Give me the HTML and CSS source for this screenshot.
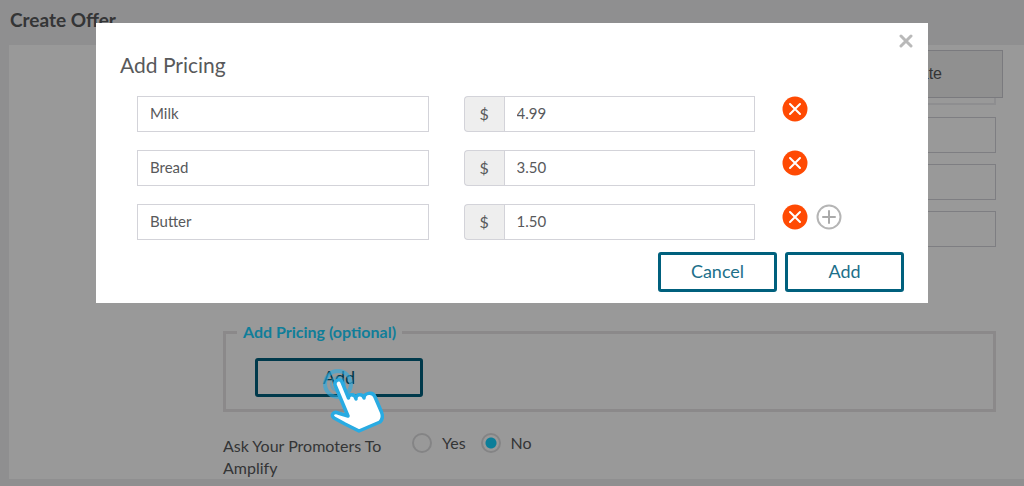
FILE: index.html
```
<!DOCTYPE html>
<html lang="en">
<head>
  <meta charset="UTF-8">
  <meta name="viewport" content="width=device-width, initial-scale=1.0">
  <title>Create Offer</title>
  <link rel="stylesheet" href="styles.css">
</head>
<body>
  <header class="page-header">
    <h1>Create Offer</h1>
  </header>

  <main class="panel">
    <div class="tabs">
      <button type="button" class="tab">Update</button>
    </div>

    <form class="offer-form">
      <div class="section-end"></div>
      <div class="offer-fields">
        <input type="text" class="field" aria-label="Offer title">
        <input type="text" class="field" aria-label="Offer type">
        <input type="text" class="field" aria-label="Offer link">
      </div>

      <fieldset class="pricing">
        <legend>Add Pricing (optional)</legend>
        <div class="add-wrap">
          <button type="button" class="btn btn-wide">Add</button>
          <svg class="hand" width="90" height="85" viewBox="0 0 90 85" aria-hidden="true">
            <circle cx="28" cy="29" r="13" fill="none" stroke="#29abe2" stroke-width="4" opacity=".6"/>
            <circle cx="28" cy="29" r="7" fill="none" stroke="#29abe2" stroke-width="2" opacity=".4"/>
            <path d="M25 30 C24 25 30 23 32 27 L38.500 43 C38 39 45 38 46 44 C45 39 53 38 54 43 C54 38 63 36 65 42 L71.500 57 C73 61 72 65 70 67 L49 76 L35 69 L24 63 C20 60 24 56 28 58 L38 61 Z" fill="#fff" stroke="#29abe2" stroke-width="3.500" stroke-linejoin="round"/>
          </svg>
        </div>
      </fieldset>

      <div class="amplify" role="radiogroup" aria-labelledby="amplify-label">
        <span id="amplify-label" class="amplify-label">Ask Your Promoters To Amplify</span>
        <label class="radio"><input type="radio" name="amplify" value="yes"> Yes</label>
        <label class="radio"><input type="radio" name="amplify" value="no" checked> No</label>
      </div>
    </form>
  </main>

  <div class="overlay">
    <div class="modal" role="dialog" aria-labelledby="modal-title">
      <button type="button" class="close" aria-label="Close">
        <svg width="14" height="14" viewBox="0 0 14 14"><path d="M2 2l10 10M12 2L2 12" stroke="#b9b9b9" stroke-width="3" stroke-linecap="round"/></svg>
      </button>
      <h2 id="modal-title">Add Pricing</h2>

      <div class="price-row">
        <input type="text" class="field name" value="Milk" aria-label="Item">
        <div class="price">
          <span class="currency">$</span>
          <input type="text" class="field" value="4.99" aria-label="Price">
        </div>
        <div class="actions">
          <button type="button" class="icon-btn" aria-label="Remove">
            <svg width="26" height="26" viewBox="0 0 26 26"><circle cx="13" cy="13" r="12.5" fill="#ff4a03"/><path d="M8 8l10 10M18 8L8 18" stroke="#fff" stroke-width="2" stroke-linecap="round"/></svg>
          </button>
        </div>
      </div>

      <div class="price-row">
        <input type="text" class="field name" value="Bread" aria-label="Item">
        <div class="price">
          <span class="currency">$</span>
          <input type="text" class="field" value="3.50" aria-label="Price">
        </div>
        <div class="actions">
          <button type="button" class="icon-btn" aria-label="Remove">
            <svg width="26" height="26" viewBox="0 0 26 26"><circle cx="13" cy="13" r="12.5" fill="#ff4a03"/><path d="M8 8l10 10M18 8L8 18" stroke="#fff" stroke-width="2" stroke-linecap="round"/></svg>
          </button>
        </div>
      </div>

      <div class="price-row">
        <input type="text" class="field name" value="Butter" aria-label="Item">
        <div class="price">
          <span class="currency">$</span>
          <input type="text" class="field" value="1.50" aria-label="Price">
        </div>
        <div class="actions">
          <button type="button" class="icon-btn" aria-label="Remove">
            <svg width="26" height="26" viewBox="0 0 26 26"><circle cx="13" cy="13" r="12.5" fill="#ff4a03"/><path d="M8 8l10 10M18 8L8 18" stroke="#fff" stroke-width="2" stroke-linecap="round"/></svg>
          </button>
          <button type="button" class="icon-btn" aria-label="Add row">
            <svg width="26" height="26" viewBox="0 0 26 26"><circle cx="13" cy="13" r="11.5" fill="none" stroke="#b5b5b5" stroke-width="2"/><path d="M13 7v12M7 13h12" stroke="#aaa" stroke-width="2" stroke-linecap="round"/></svg>
          </button>
        </div>
      </div>

      <div class="modal-footer">
        <button type="button" class="btn">Cancel</button>
        <button type="button" class="btn">Add</button>
      </div>
    </div>
  </div>
</body>
</html>
```
FILE: styles.css
```
* {
  box-sizing: border-box;
}
body {
  margin: 0;
  background-color: #eeeef1;
  color: #58595b;
  font-family: Lato, "Open Sans", sans-serif;
  font-size: 16px;
}
button,
input {
  font-family: inherit;
  font-size: inherit;
  color: inherit;
}
.page-header {
  padding: 6px 10px 11px;
}
.page-header h1 {
  margin: 0;
  font-size: 19px;
  line-height: 28px;
  font-weight: 700;
}

/* offer form behind the dialog */
.panel {
  margin: 0 0 7px 9px;
  padding-top: 5px;
  background-color: #fff;
}
.tabs {
  display: flex;
  justify-content: flex-end;
  padding-right: 21px;
}
.tab {
  height: 48px;
  padding: 0 60px;
  border: 1px solid #ccccd2;
  background-color: #f0f0f0;
  font-family: "Liberation Sans", Arial, sans-serif;
}
.offer-form {
  margin-left: 214px;
  padding-right: 28px;
}
.section-end {
  height: 7px;
  border: 2px solid #ededf0;
  border-top: 0;
}
.offer-fields {
  display: flex;
  flex-direction: column;
  gap: 11px;
  margin: 12px 0 75px 190px;
}
.field {
  width: 100%;
  height: 36px;
  padding: 0 12px 2px;
  border: 1px solid #d3d3d9;
  border-radius: 0;
  background-color: #fff;
  font-size: 15px;
}
.pricing {
  margin: 0;
  padding: 16px 29px 12px;
  border: 3px solid #e8e4e6;
}
.pricing legend {
  height: 20px;
  margin-left: -18px;
  padding: 0 6px;
  color: #1cd2ff;
  font-size: 16px;
  line-height: 20px;
  font-weight: 700;
}
.add-wrap {
  position: relative;
  width: 168px;
}
.btn {
  width: 119px;
  height: 40px;
  padding: 0 0 2px;
  border: 3px solid #00607d;
  border-radius: 3px;
  background-color: #fff;
  color: #1c6f8a;
  font-size: 18px;
}
.btn-wide {
  display: block;
  width: 100%;
  height: 39px;
  color: #00607d;
}
.hand {
  position: absolute;
  top: -3px;
  left: 55px;
  z-index: 20;
}
.amplify {
  display: flex;
  align-items: flex-start;
  padding: 20px 0 0;
  font-size: 16px;
  line-height: 22px;
}
.amplify-label {
  width: 189px;
  padding: 3px 20px 0 0;
}
.radio {
  display: flex;
  align-items: center;
  gap: 10px;
  margin-right: 15px;
}
.radio input {
  appearance: none;
  width: 20px;
  height: 20px;
  margin: 0;
  border: 2px solid #dcdcde;
  border-radius: 50%;
}
.radio input:checked {
  background: radial-gradient(circle, #14d2ff 5px, transparent 6px);
}

/* dialog */
.overlay {
  position: fixed;
  inset: 0;
  z-index: 10;
  padding: 23px 96px;
  background-color: rgba(0, 0, 0, 0.4);
}
.modal {
  position: relative;
  padding: 28px 24px 11px;
  background-color: #fff;
}
.modal h2 {
  margin: 0 0 17px;
  font-size: 21px;
  line-height: 28px;
  font-weight: 400;
}
.close {
  position: absolute;
  top: 11px;
  right: 15px;
  padding: 0;
  border: 0;
  background: none;
  line-height: 0;
}
.price-row {
  display: flex;
  margin: 0 0 18px 17px;
}
.name,
.price {
  flex: 1 1 292px;
  min-width: 0;
}
.price {
  display: flex;
  margin-left: 35px;
}
.currency {
  flex: none;
  width: 40px;
  border: 1px solid #d3d3d9;
  border-right: 0;
  border-radius: 4px 0 0 4px;
  background-color: #eee;
  font-size: 16px;
  line-height: 34px;
  text-align: center;
}
.actions {
  display: flex;
  flex: none;
  align-items: flex-start;
  gap: 8px;
  width: 122px;
  margin-left: 27px;
}
.icon-btn {
  padding: 0;
  border: 0;
  background: none;
  line-height: 0;
}
.modal-footer {
  display: flex;
  justify-content: flex-end;
  gap: 8px;
  margin-top: -6px;
}
```
